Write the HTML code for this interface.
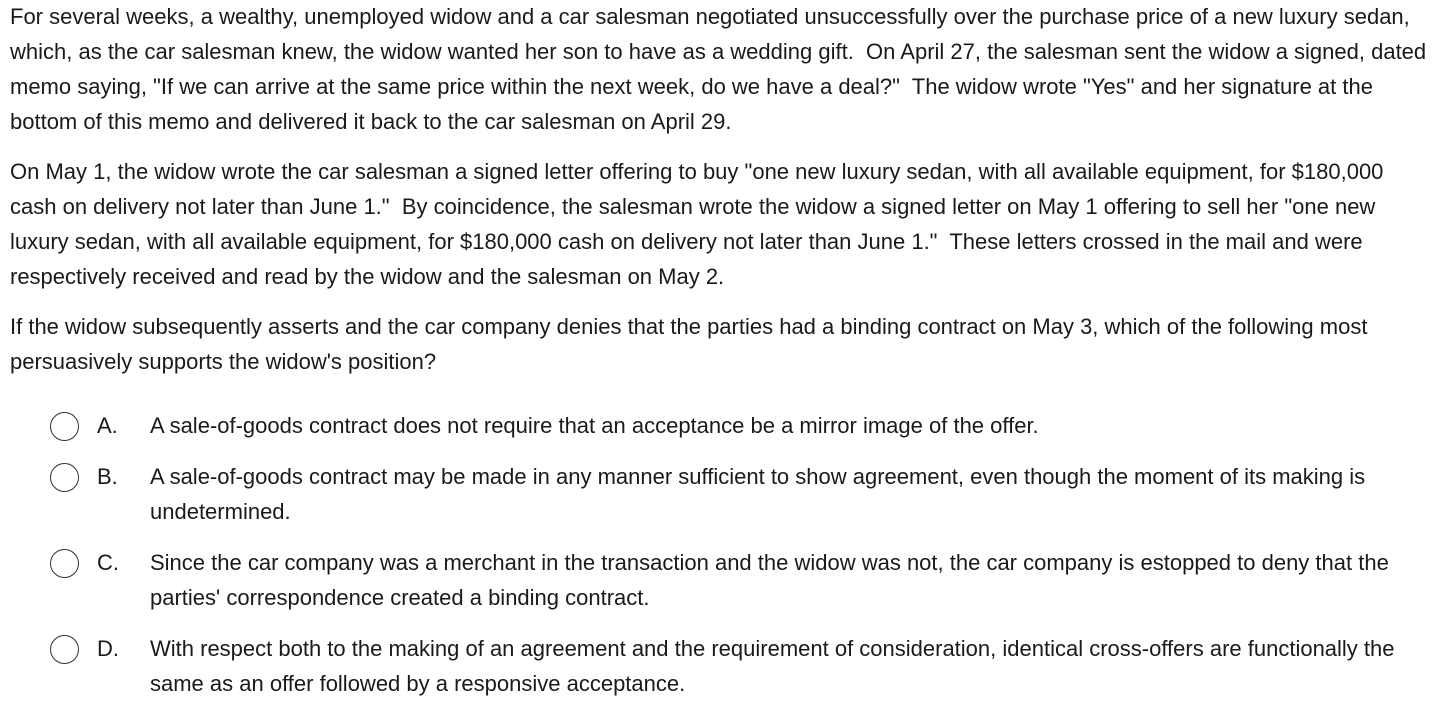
<!DOCTYPE html>
<html><head><style>
body{margin:0;background:#fff;font-family:"Liberation Sans",Arial,sans-serif;font-size:22px;line-height:35px;color:#1a1a1a;}
.wrap{padding:0 10px;white-space:nowrap;}
p{margin:0 0 15px 0;}
p.first{margin-top:-1px}
.opt{position:relative;padding-left:140px;margin-bottom:16px;}
.opt .r{position:absolute;left:40px;top:4px;width:27px;height:27px;border:1.5px solid #333;border-radius:50%;}
.opt .l{position:absolute;left:87px;top:0;}
.opts{margin-top:29px;}
</style></head><body><div class="wrap">
<p class="first">For several weeks, a wealthy, unemployed widow and a car salesman negotiated unsuccessfully over the purchase price of a new luxury sedan,<br>which, as the car salesman knew, the widow wanted her son to have as a wedding gift.&nbsp; On April 27, the salesman sent the widow a signed, dated<br>memo saying, "If we can arrive at the same price within the next week, do we have a deal?"&nbsp; The widow wrote "Yes" and her signature at the<br>bottom of this memo and delivered it back to the car salesman on April 29.</p>
<p>On May 1, the widow wrote the car salesman a signed letter offering to buy "one new luxury sedan, with all available equipment, for $180,000<br>cash on delivery not later than June 1."&nbsp; By coincidence, the salesman wrote the widow a signed letter on May 1 offering to sell her "one new<br>luxury sedan, with all available equipment, for $180,000 cash on delivery not later than June 1."&nbsp; These letters crossed in the mail and were<br>respectively received and read by the widow and the salesman on May 2.</p>
<p>If the widow subsequently asserts and the car company denies that the parties had a binding contract on May 3, which of the following most<br>persuasively supports the widow's position?</p>
<div class="opts">
<div class="opt"><span class="r"></span><span class="l">A.</span>A sale-of-goods contract does not require that an acceptance be a mirror image of the offer.</div>
<div class="opt"><span class="r"></span><span class="l">B.</span>A sale-of-goods contract may be made in any manner sufficient to show agreement, even though the moment of its making is<br>undetermined.</div>
<div class="opt"><span class="r"></span><span class="l">C.</span>Since the car company was a merchant in the transaction and the widow was not, the car company is estopped to deny that the<br>parties' correspondence created a binding contract.</div>
<div class="opt"><span class="r"></span><span class="l">D.</span>With respect both to the making of an agreement and the requirement of consideration, identical cross-offers are functionally the<br>same as an offer followed by a responsive acceptance.</div>
</div>
</div></body></html>
